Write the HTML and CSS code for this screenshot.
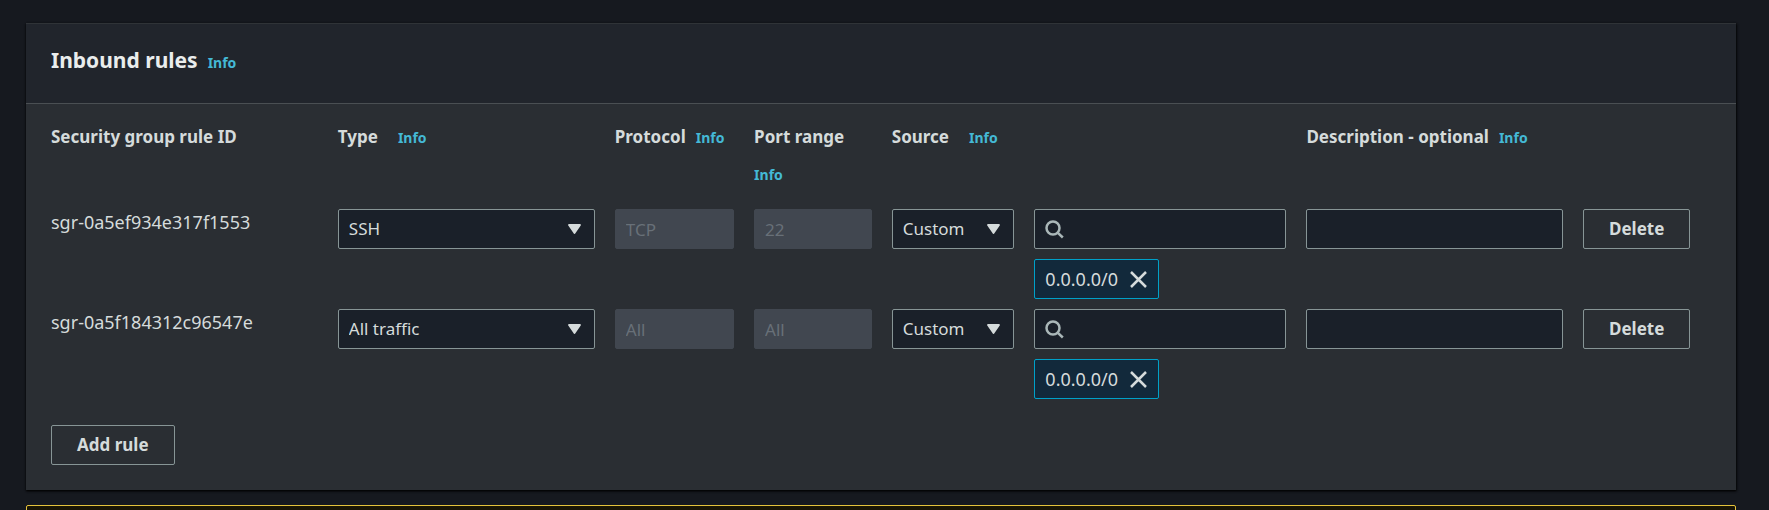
FILE: index.html
```html
<!DOCTYPE html>
<html lang="en">
<head>
<meta charset="utf-8">
<title>Inbound rules</title>
<meta name="viewport" content="width=device-width, initial-scale=1">
<link rel="stylesheet" href="styles.css">
</head>
<body>
<svg class="sprite" aria-hidden="true">
  <symbol id="caret" viewBox="0 0 13 10"><path d="M1 1h11L6.500 9z" fill="currentColor" stroke="currentColor" stroke-width="1.800" stroke-linejoin="round"/></symbol>
  <symbol id="search" viewBox="0 0 19 19"><g fill="none" stroke="currentColor" stroke-width="2.500"><circle cx="8" cy="8" r="6.500"/><path d="M12.600 12.600l5.200 4.900"/></g></symbol>
  <symbol id="close" viewBox="0 0 17 17"><path d="M1 1l15 15M16 1L1 16" fill="none" stroke="currentColor" stroke-width="2.500"/></symbol>
</svg>
<main class="page">
  <section class="panel">
    <header class="panel-header">
      <h2 class="title">Inbound rules</h2>
      <a class="info" href="#">Info</a>
    </header>
    <div class="panel-body">
      <table class="rules">
        <colgroup>
          <col class="col-id"><col class="col-type"><col class="col-protocol"><col class="col-port">
          <col class="col-source"><col class="col-cidr"><col class="col-description"><col class="col-action">
        </colgroup>
        <thead>
          <tr>
            <th scope="col">Security group rule ID</th>
            <th scope="col"><span class="label wide">Type <a class="info" href="#">Info</a></span></th>
            <th scope="col"><span class="label">Protocol <a class="info" href="#">Info</a></span></th>
            <th scope="col"><span class="label">Port range <a class="info" href="#">Info</a></span></th>
            <th scope="col" colspan="2"><span class="label wide">Source <a class="info" href="#">Info</a></span></th>
            <th scope="col"><span class="label">Description - optional <a class="info" href="#">Info</a></span></th>
            <td></td>
          </tr>
        </thead>
        <tbody>
          <tr>
            <td class="rule-id">sgr-0a5ef934e317f1553</td>
            <td><div class="field"><select class="control" aria-label="Type"><option>SSH</option></select><svg class="caret"><use href="#caret"/></svg></div></td>
            <td><input class="control" type="text" value="TCP" aria-label="Protocol" disabled></td>
            <td><input class="control" type="text" value="22" aria-label="Port range" disabled></td>
            <td><div class="field"><select class="control" aria-label="Source type"><option>Custom</option></select><svg class="caret"><use href="#caret"/></svg></div></td>
            <td>
              <div class="field"><input class="control search" type="search" aria-label="Source"><svg class="lens"><use href="#search"/></svg></div>
              <div class="token">0.0.0.0/0 <button class="dismiss" type="button" aria-label="Remove 0.0.0.0/0"><svg class="cross"><use href="#close"/></svg></button></div>
            </td>
            <td><input class="control" type="text" aria-label="Description"></td>
            <td><button class="button fill" type="button">Delete</button></td>
          </tr>
          <tr>
            <td class="rule-id">sgr-0a5f184312c96547e</td>
            <td><div class="field"><select class="control" aria-label="Type"><option>All traffic</option></select><svg class="caret"><use href="#caret"/></svg></div></td>
            <td><input class="control" type="text" value="All" aria-label="Protocol" disabled></td>
            <td><input class="control" type="text" value="All" aria-label="Port range" disabled></td>
            <td><div class="field"><select class="control" aria-label="Source type"><option>Custom</option></select><svg class="caret"><use href="#caret"/></svg></div></td>
            <td>
              <div class="field"><input class="control search" type="search" aria-label="Source"><svg class="lens"><use href="#search"/></svg></div>
              <div class="token">0.0.0.0/0 <button class="dismiss" type="button" aria-label="Remove 0.0.0.0/0"><svg class="cross"><use href="#close"/></svg></button></div>
            </td>
            <td><input class="control" type="text" aria-label="Description"></td>
            <td><button class="button fill" type="button">Delete</button></td>
          </tr>
        </tbody>
      </table>
      <button class="button" type="button">Add rule</button>
    </div>
  </section>
  <aside class="notice" aria-label="Warning"></aside>
</main>
</body>
</html>
```
FILE: styles.css
```css
* { box-sizing: border-box; }

html { overflow: hidden; background: #16191f; }

body {
  margin: 0;
  background: #16191f;
  color: #d5dbdb;
  font: 17px/26px "Noto Sans", "Open Sans", sans-serif;
}

.sprite { display: none; }

.page {
  display: flex;
  flex-direction: column;
  gap: 15px;
  padding: 23px 33px 0 26px;
}

.panel {
  background: #2a2e33;
  border-top: 1px solid #2f3337;
  box-shadow: 0 1px 2px #000000, 1px 1px 2px #0a0c0f;
}

.panel-header {
  display: flex;
  align-items: baseline;
  gap: 10px;
  padding: 20px 25px 27px;
  background: #21252c;
  border-bottom: 1px solid #4a4f53;
}

.title {
  margin: 0;
  color: #eaeded;
  font-size: 21px;
  line-height: 32px;
  font-weight: 700;
}

.info {
  color: #44b9d6;
  font-size: 14px;
  font-weight: 700;
  text-decoration: none;
}

.panel-body { padding: 14px 46px 25px 25px; }

.rules {
  width: 100%;
  margin-bottom: 16px;
  table-layout: fixed;
  border-collapse: collapse;
}

.col-id { width: 17.5%; }
.col-type { width: 16.9%; }
.col-protocol { width: 8.5%; }
.col-port { width: 8.4%; }
.col-source { width: 8.7%; }
.col-cidr { width: 16.6%; }
.col-description { width: 16.9%; }
.col-action { width: 6.5%; }

.rules th,
.rules td {
  padding: 0 20px 10px 0;
  text-align: left;
  vertical-align: top;
}

.rules th {
  padding-bottom: 15px;
  line-height: 38px;
  font-weight: 700;
}

.rules td:last-child { padding-right: 0; }

.rules .rule-id { font-size: 18px; }

.label {
  display: flex;
  flex-wrap: wrap;
  align-items: baseline;
  column-gap: 10px;
}

.label.wide { column-gap: 20px; }

.field { position: relative; }

.control {
  display: block;
  width: 100%;
  height: 40px;
  margin: 0;
  padding: 0 10px;
  appearance: none;
  background: #1a2029;
  border: 1px solid #879596;
  border-radius: 2px;
  color: #d5dbdb;
  font: inherit;
}

.control:disabled {
  background: #414750;
  border-color: #414750;
  color: #687078;
  opacity: 1;
}

.search { padding-left: 40px; }

.caret {
  position: absolute;
  top: 15px;
  right: 14px;
  width: 13px;
  height: 10px;
  pointer-events: none;
}

.lens {
  position: absolute;
  top: 11px;
  left: 11px;
  width: 19px;
  height: 19px;
  color: #aab7b8;
  pointer-events: none;
}

.token {
  display: inline-flex;
  align-items: center;
  gap: 12px;
  height: 40px;
  margin-top: 10px;
  padding: 0 11px 0 10px;
  vertical-align: top;
  background: #12293b;
  border: 1px solid #00a1c9;
  border-radius: 2px;
  font-size: 18px;
}

.dismiss {
  display: flex;
  padding: 0;
  background: none;
  border: 0;
  color: inherit;
}

.cross {
  width: 17px;
  height: 17px;
}

.button {
  display: block;
  height: 40px;
  padding: 0 25px;
  background: none;
  border: 1px solid #879596;
  border-radius: 2px;
  color: #d5dbdb;
  font: inherit;
  font-weight: 700;
}

.button.fill {
  width: 100%;
  padding: 0;
}

.notice {
  min-height: 60px;
  background: #1a1605;
  border: 1px solid #e5c33c;
  border-radius: 2px;
}
```
